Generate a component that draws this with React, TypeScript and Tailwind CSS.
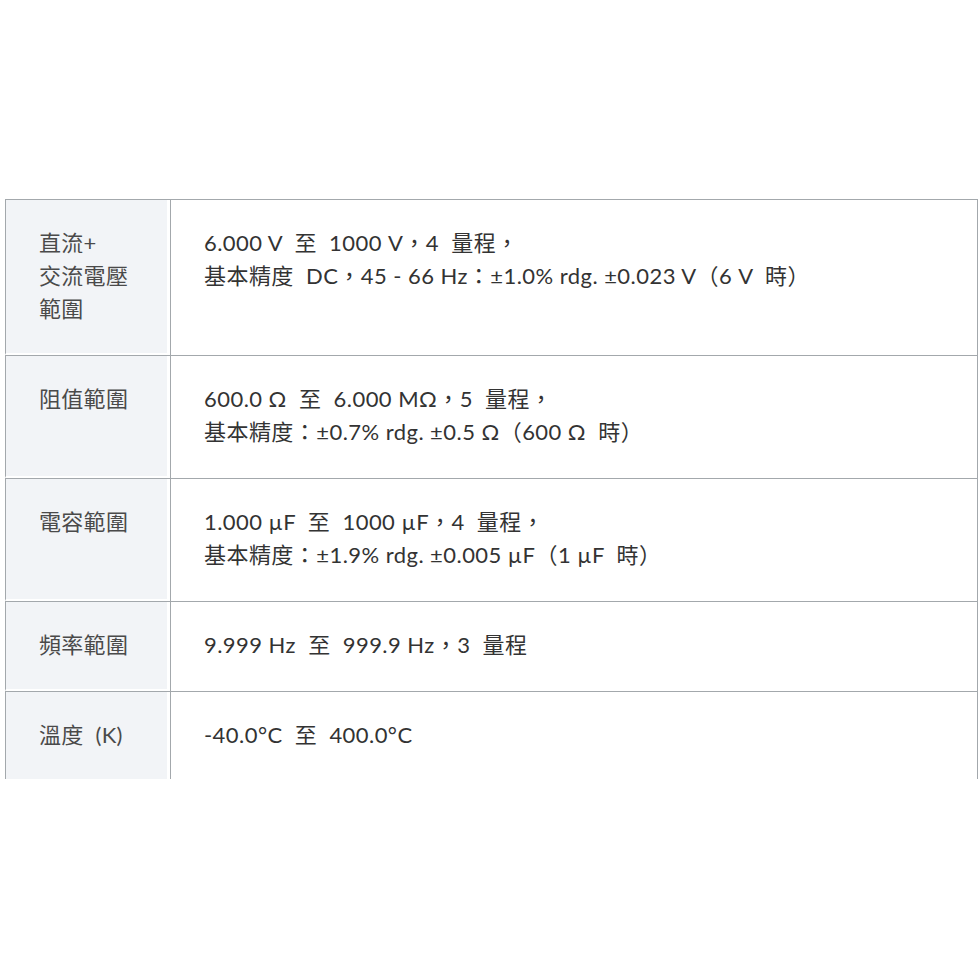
import React from "react";

const rows: { label: React.ReactNode; lines: string[] }[] = [
  {
    label: (
      <>
        直流+
        <br />
        交流電壓
        <br />
        範圍
      </>
    ),
    lines: [
      "6.000 V  至  1000 V，4  量程，",
      "基本精度  DC，45 - 66 Hz：±1.0% rdg. ±0.023 V（6 V  時）",
    ],
  },
  {
    label: "阻值範圍",
    lines: ["600.0 Ω  至  6.000 MΩ，5  量程，", "基本精度：±0.7% rdg. ±0.5 Ω（600 Ω  時）"],
  },
  {
    label: "電容範圍",
    lines: ["1.000 µF  至  1000 µF，4  量程，", "基本精度：±1.9% rdg. ±0.005 µF（1 µF  時）"],
  },
  { label: "頻率範圍", lines: ["9.999 Hz  至  999.9 Hz，3  量程"] },
  { label: "溫度  (K)", lines: ["-40.0°C  至  400.0°C"] },
];

export default function App() {
  return (
    <div
      className="w-[978px] h-[978px] bg-white"
      style={{ fontFamily: 'Lato, "Noto Sans CJK TC", sans-serif' }}
    >
      <div className="h-[199px]" />
      <div className="ml-[5px] w-[973px] h-[580px] overflow-hidden">
        {rows.map((r, i) => (
          <div key={i} className="flex border-t border-[#a3a8ac]">
            <div className="w-[165px] shrink-0 border-l border-[#a3a8ac] bg-[#f2f4f7] border-r-[3px] border-r-white border-b-2 border-b-white pl-[33px] pt-[26px] pb-[28px] text-[22px] leading-[33px] tracking-[0.3px] text-[#4a4a4a] whitespace-pre-wrap">
              {r.label}
            </div>
            <div className="flex-1 border-l border-r border-[#a3a8ac] pl-[33px] pt-[26px] pb-[30px] text-[22px] leading-[33px] tracking-[0.45px] text-[#333]">
              {r.lines.map((l, j) => (
                <div key={j} className="whitespace-pre">
                  {l}
                </div>
              ))}
            </div>
          </div>
        ))}
      </div>
    </div>
  );
}
